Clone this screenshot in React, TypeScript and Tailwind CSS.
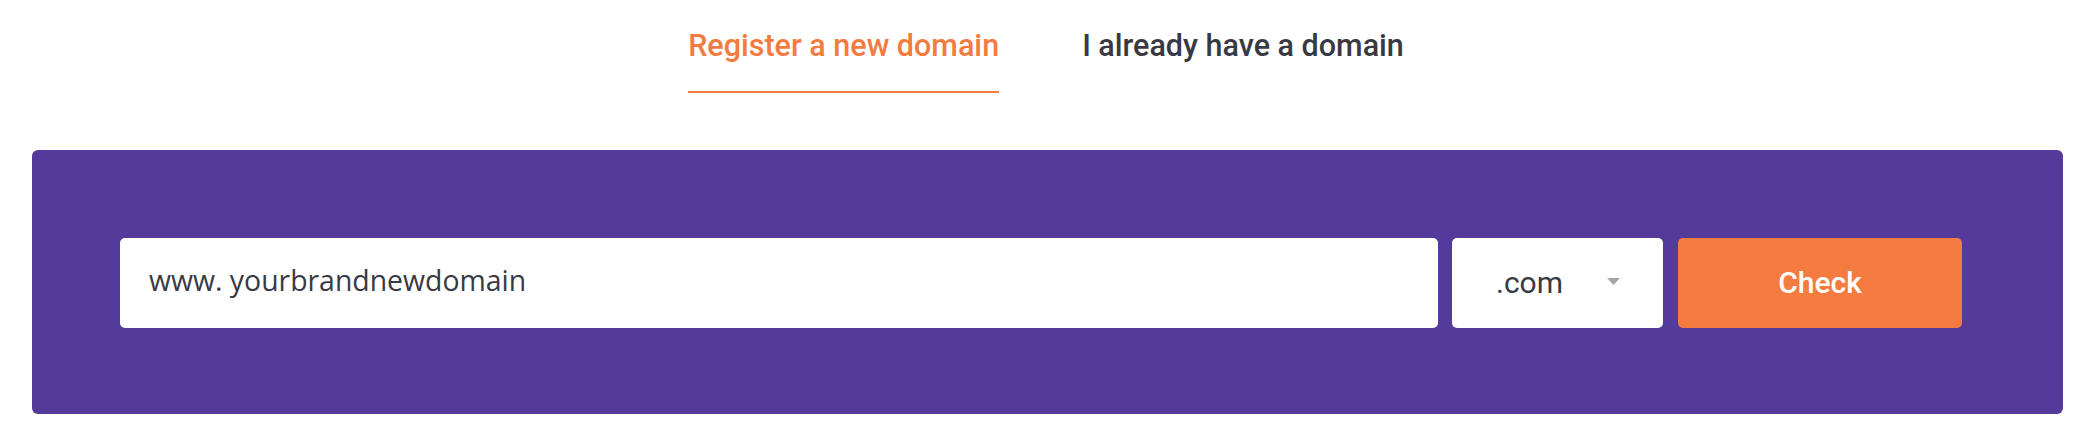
import { useState } from "react";

const tabs = ["Register a new domain", "I already have a domain"];

export default function App() {
    const [active, setActive] = useState(0);
    const [domain, setDomain] = useState("www. yourbrandnewdomain");

    return (
        <div className="w-full h-[448px] bg-white font-['Roboto',sans-serif]">
            {/* tabs */}
            <div className="flex justify-center gap-[83px] pt-[28px]">
                {tabs.map((t, i) => (
                    <button
                        key={t}
                        onClick={() => setActive(i)}
                        className="flex flex-col items-stretch"
                    >
                        <span
                            className={`text-[30.5px] leading-[36px] font-medium whitespace-nowrap ${
                                i === active ? "text-[#f47b40]" : "text-[#393943]"
                            }`}
                        >
                            {t}
                        </span>
                        <span
                            className={`mt-[27px] h-[2px] ${i === active ? "bg-[#f47b40]" : "bg-transparent"}`}
                        />
                    </button>
                ))}
            </div>

            {/* search panel */}
            <div className="mt-[57px] ml-[32px] mr-[29px] h-[264px] rounded-[6px] bg-[#533a9b] pl-[88px] pr-[101px] pt-[88px]">
                <div className="flex h-[90px] gap-[14px]">
                    <div className="flex-1 rounded-[5px] bg-white pl-[29px] pt-[22px]">
                        <input
                            value={domain}
                            onChange={(e) => setDomain(e.target.value)}
                            className="w-full bg-transparent text-[28.4px] leading-[40px] text-[#383a44] font-['Open_Sans',sans-serif] outline-none"
                        />
                    </div>
                    <div className="flex w-[211px] items-center rounded-[5px] bg-white pl-[44px] pr-[43px]">
                        <span className="flex-1 text-[30px] leading-[36px] text-[#383a44]">.com</span>
                        <svg width="13" height="7" viewBox="0 0 13 7" className="mb-[4px]">
                            <path d="M0 0h13L6.5 7z" fill="#a3a3ab" />
                        </svg>
                    </div>
                    <button className="ml-px flex w-[284px] items-center justify-center rounded-[5px] bg-[#f67b40] text-[30px] leading-[36px] font-medium text-white">
                        Check
                    </button>
                </div>
            </div>
        </div>
    );
}
